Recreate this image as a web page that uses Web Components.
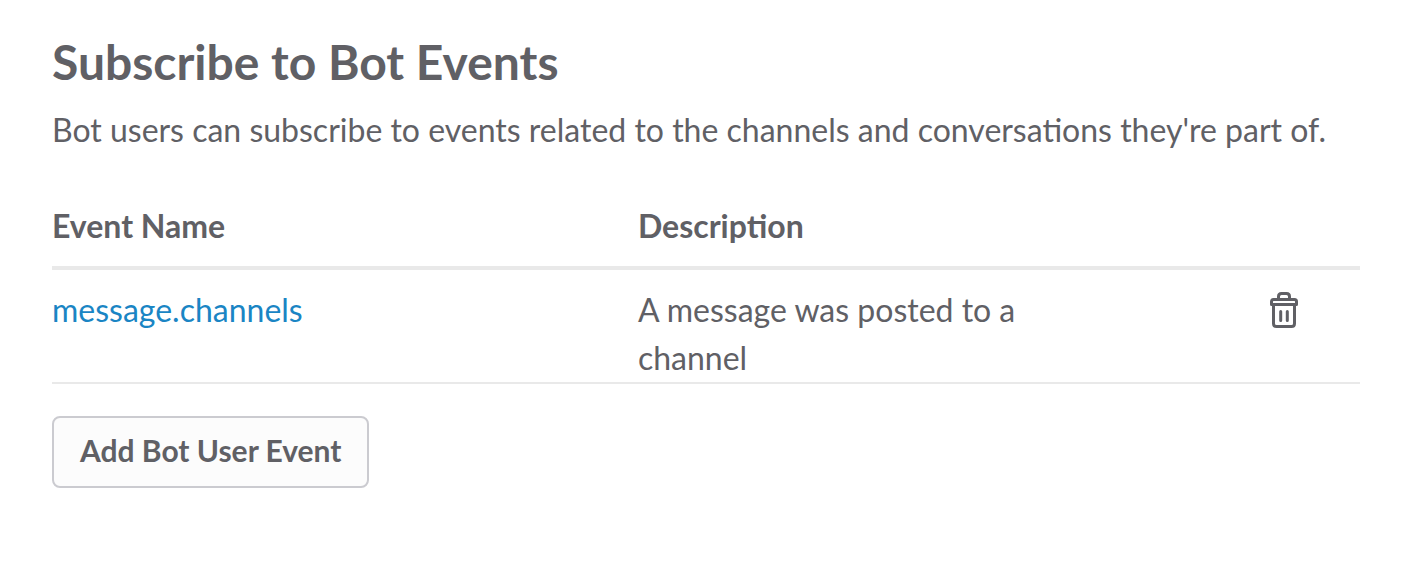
<!DOCTYPE html>
<html lang="en">
<head>
<meta charset="utf-8">
<meta name="viewport" content="width=device-width, initial-scale=1">
<title>Subscribe to Bot Events</title>
<style>
  body { margin: 0; background: #fff; color: #606065; font-family: Lato, "Liberation Sans", sans-serif; font-size: 32px; line-height: 48px; }
</style>
</head>
<body>
<event-settings>
  <span slot="title">Subscribe to Bot Events</span>
  <span slot="summary">Bot users can subscribe to events related to the channels and conversations they're part of.</span>
  <event-table></event-table>
  <action-button slot="actions">Add Bot User Event</action-button>
</event-settings>

<template id="event-settings">
  <style>
    :host { display: block; padding: 30px 54px 32px 52px; }
    h2 { margin: 0; font-size: 48px; line-height: 64px; font-weight: 700; }
    p { margin: 12px 0 40px; }
    footer { display: flex; margin-top: 32px; }
  </style>
  <section>
    <h2><slot name="title"></slot></h2>
    <p><slot name="summary"></slot></p>
    <slot></slot>
    <footer><slot name="actions"></slot></footer>
  </section>
</template>

<template id="event-table">
  <style>
    :host { display: block; }
    table { width: 100%; table-layout: fixed; border-collapse: separate; border-spacing: 0; }
    .name { width: 44.8%; }
    .about { width: 30%; }
    th, td { padding: 0; text-align: left; vertical-align: top; }
    th { padding: 8px 0 16px; border-bottom: 4px solid #e9e9e9; font-weight: 700; }
    td { padding-top: 16px; border-bottom: 2px solid #e9e9e9; }
    a { color: #1a85c4; text-decoration: none; }
    trash-button { margin-left: auto; margin-right: 60px; }
  </style>
  <table>
    <colgroup><col class="name"><col class="about"><col></colgroup>
    <thead>
      <tr><th scope="col">Event Name</th><th scope="col">Description</th><th scope="col" aria-label="Actions"></th></tr>
    </thead>
    <tbody>
      <tr>
        <td><a href="#message.channels">message.channels</a></td>
        <td>A message was posted to a channel</td>
        <td><trash-button></trash-button></td>
      </tr>
    </tbody>
  </table>
</template>

<template id="trash-button">
  <style>
    :host { display: block; width: 32px; }
    button { display: block; margin: 4px 0 0; padding: 0; border: 0; background: none; color: inherit; cursor: pointer; }
    svg { display: block; }
  </style>
  <button type="button" aria-label="Delete event">
    <svg width="32" height="40" viewBox="0 0 32 40" fill="none" stroke="currentColor" stroke-width="3" stroke-linejoin="round" stroke-linecap="round" aria-hidden="true">
      <path d="M3.500 14.500V11.500Q3.500 9.500 5.500 9.500H26.500Q28.500 9.500 28.500 11.500V14.500ZM10.500 9V6.500Q10.500 3.500 13.500 3.500H18.500Q21.500 3.500 21.500 6.500V9M5.500 15V33.500Q5.500 36.500 8.500 36.500H23.500Q26.500 36.500 26.500 33.500V15M12.700 21.500V30.500M19.300 21.500V30.500"/>
    </svg>
  </button>
</template>

<template id="action-button">
  <style>
    :host { display: block; }
    button { display: block; margin: 0; padding: 8px 26px 12px; border: 2px solid #cbcbd0; border-radius: 8px; background: #fcfcfc; color: inherit; font: inherit; font-size: 30px; font-weight: 700; line-height: 48px; cursor: pointer; }
  </style>
  <button type="button"><slot></slot></button>
</template>

<script>
  for (const name of ["event-settings", "event-table", "trash-button", "action-button"]) {
    customElements.define(name, class extends HTMLElement {
      constructor() {
        super();
        this.attachShadow({ mode: "open" }).append(document.getElementById(name).content.cloneNode(true));
      }
    });
  }
</script>
</body>
</html>
